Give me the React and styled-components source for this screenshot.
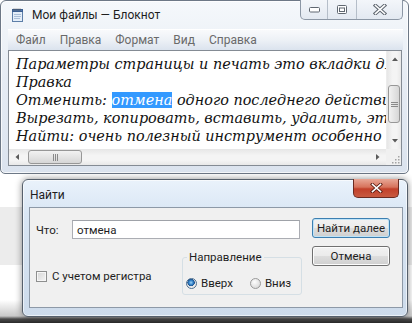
import React from 'react';
import styled, { createGlobalStyle } from 'styled-components';

const GlobalStyle = createGlobalStyle`
  html, body { margin: 0; padding: 0; }
  body {
    width: 412px;
    height: 323px;
    overflow: hidden;
    font-family: Roboto, "Noto Sans", sans-serif;
    background: linear-gradient(to bottom, #fff 0, #fff 207px, #ececec 207px, #ececec 265px,
      #fff 265px, #fff 300px, #c9c9c9 316px, #4a4a4a 319px, #2a2a2a 323px);
  }
`;

const Page = styled.div`
  display: flex;
  flex-direction: column;
  align-items: flex-start;
`;

/* ---------- notepad window ---------- */

const Window = styled.div`
  width: 409px;
  height: 174px;
  box-sizing: border-box;
  border: 1px solid #6d7886;
  border-radius: 6px 6px 5px 5px;
  background: linear-gradient(to bottom, #f5f8fb 0%, #e6ecf4 45%, #dbe3ee 100%);
  box-shadow: inset 0 0 0 1px rgba(255, 255, 255, 0.75);
  padding: 0 4px 7px 7px;
  display: flex;
  flex-direction: column;
`;

const TitleBar = styled.div`
  height: 28px;
  display: flex;
  align-items: center;
`;

const TitleText = styled.span`
  margin-left: 8px;
  font-size: 12px;
  color: #1e1e1e;
  flex: 1;
`;

const CaptionGroup = styled.div`
  align-self: flex-start;
  margin-top: -1px;
  margin-right: 1px;
  display: flex;
  border: 1px solid #8c97a5;
  border-top: none;
  border-radius: 0 0 5px 5px;
  overflow: hidden;
  background: linear-gradient(to bottom, #f3f6fa, #e3e9f1);
`;

const CaptionButton = styled.div`
  width: ${p => p.w}px;
  height: 19px;
  display: flex;
  align-items: center;
  justify-content: center;
  border-left: ${p => (p.first ? 'none' : '1px solid #b5bec9')};
`;

const MenuBar = styled.div`
  height: 21px;
  margin-right: 1px;
  display: flex;
  align-items: center;
  gap: 14px;
  padding-left: 8px;
  background: linear-gradient(to bottom, #f9fafc 0%, #edf1f6 50%, #dbe3ee 100%);
  border-top: 1px solid #fff;
  box-sizing: border-box;
`;

const MenuItem = styled.span`
  font-size: 12px;
  color: #6a6a6a;
`;

const EditArea = styled.div`
  flex: 1;
  margin-right: 2px;
  border: 1px solid #848b94;
  display: grid;
  grid-template-columns: 1fr 15px;
  grid-template-rows: 1fr 16px;
  background: #fff;
  min-height: 0;
`;

const TextPane = styled.div`
  padding: 4px 0 0 7px;
  overflow: hidden;
  white-space: nowrap;
  font-family: "DejaVu Serif", "Liberation Serif", serif;
  font-style: italic;
  font-size: 14.4px;
  line-height: 18px;
  color: #111;
`;

const Selected = styled.span`
  background: #3399ff;
  color: #fff;
`;

const VScroll = styled.div`
  display: flex;
  flex-direction: column;
  background: linear-gradient(to right, #e6e6e6, #f4f4f4 40%, #f4f4f4 70%, #e8e8e8);
  border-left: 1px solid #ececec;
`;

const HScroll = styled.div`
  display: flex;
  align-items: center;
  background: linear-gradient(to bottom, #e6e6e6, #f4f4f4 40%, #f4f4f4 70%, #e8e8e8);
`;

const ArrowCell = styled.div`
  width: ${p => p.w || 15}px;
  height: ${p => p.h || 16}px;
  display: flex;
  align-items: center;
  justify-content: center;
  flex-shrink: 0;
`;

const Thumb = styled.div`
  box-sizing: border-box;
  border: 1px solid #979797;
  border-radius: 3px;
  background: ${p => (p.vertical
    ? 'linear-gradient(to right, #f2f2f2, #e4e4e4 50%, #d6d6d6)'
    : 'linear-gradient(to bottom, #f2f2f2, #e4e4e4 50%, #d6d6d6)')};
  display: flex;
  align-items: center;
  justify-content: center;
  flex-shrink: 0;
`;

const VThumb = styled(Thumb)`
  margin: 17px 1px 0 1px;
  height: 38px;
`;

const HThumb = styled(Thumb)`
  margin-left: 2px;
  width: 54px;
  height: 14px;
`;

const Spacer = styled.div`
  flex: 1;
`;

const Grip = styled.div`
  background: #f0f0f0;
  display: flex;
  align-items: flex-end;
  justify-content: flex-end;
`;

/* ---------- find dialog ---------- */

const Dialog = styled.div`
  margin: 5px 0 0 22px;
  width: 386px;
  height: 138px;
  box-sizing: border-box;
  border: 1px solid #56606c;
  border-radius: 6px;
  background: linear-gradient(to bottom, #eaf2fb 0%, #d9e6f4 25%, #cddbeb 100%);
  box-shadow: 0 0 7px rgba(0, 0, 0, 0.45), inset 0 0 0 1px rgba(255, 255, 255, 0.6);
  padding: 0 4px 8px 6px;
  display: flex;
  flex-direction: column;
`;

const DialogTitle = styled.div`
  height: 27px;
  display: flex;
  align-items: center;
  padding-left: 1px;
`;

const DialogTitleText = styled.span`
  flex: 1;
  font-size: 12px;
  color: #1e1e1e;
  margin-top: 2px;
`;

const RedClose = styled.div`
  align-self: flex-start;
  margin-top: -1px;
  margin-right: 4px;
  width: 46px;
  height: 19px;
  box-sizing: border-box;
  border: 1px solid #6b2a20;
  border-top: none;
  border-radius: 0 0 5px 5px;
  background: linear-gradient(to bottom, #e8a796 0%, #d7735c 45%, #c2402a 55%, #c85a40 100%);
  display: flex;
  align-items: center;
  justify-content: center;
`;

const Client = styled.div`
  flex: 1;
  border: 1px solid #8d99a7;
  background: #f0f0f0;
  padding: 10px 12px 0 6px;
  display: flex;
  gap: 10px;
  font-size: 11.5px;
  color: #1e1e1e;
`;

const LeftCol = styled.div`
  width: 266px;
  display: flex;
  flex-direction: column;
`;

const FindRow = styled.div`
  margin-top: 2px;
  display: flex;
  align-items: center;
`;

const Label = styled.span`
  width: 36px;
`;

const Input = styled.div`
  width: 228px;
  height: 19px;
  box-sizing: border-box;
  border: 1px solid #abadb3;
  border-top-color: #9fa2a8;
  background: #fff;
  padding-left: 4px;
  display: flex;
  align-items: center;
`;

const OptionsRow = styled.div`
  margin-top: 18px;
  display: flex;
  align-items: center;
  justify-content: space-between;
`;

const Check = styled.div`
  display: flex;
  align-items: center;
  gap: 5px;
`;

const CheckBox = styled.div`
  width: 11px;
  height: 11px;
  box-sizing: border-box;
  border: 1px solid #8e8f8f;
  background: linear-gradient(135deg, #d6d6d6, #f4f4f4);
  box-shadow: inset 0 0 0 1px #f6f6f6;
`;

const GroupBox = styled.div`
  position: relative;
  width: 120px;
  height: 38px;
  box-sizing: border-box;
  border: 1px solid #d5dfe5;
  border-radius: 3px;
  padding: 14px 0 0 3px;
  display: flex;
  gap: 17px;
`;

const Legend = styled.span`
  position: absolute;
  top: -8px;
  left: 4px;
  padding: 0 2px;
  line-height: 14px;
  background: #f0f0f0;
`;

const Radio = styled.div`
  display: flex;
  align-items: center;
  gap: 4px;
  line-height: 14px;
`;

const RadioDot = styled.div`
  width: 11px;
  height: 11px;
  box-sizing: border-box;
  border-radius: 50%;
  border: 1px solid ${p => (p.on ? '#4f6f8f' : '#9a9a9a')};
  background: ${p => (p.on
    ? 'radial-gradient(circle at 45% 40%, #9fd3f5 0, #2f7fc6 30%, #1b4f8a 48%, #e6e6e6 52%, #f8f8f8 100%)'
    : 'radial-gradient(circle at 40% 35%, #fdfdfd 0, #e2e2e2 60%, #cfcfcf 100%)')};
`;

const ButtonCol = styled.div`
  display: flex;
  flex-direction: column;
  gap: 8px;
`;

const Button = styled.div`
  width: 78px;
  height: 20px;
  box-sizing: border-box;
  border: 1px solid ${p => (p.primary ? '#3c7fb1' : '#707070')};
  border-radius: 3px;
  background: linear-gradient(to bottom, #f2f2f2 0%, #ebebeb 48%, #dddddd 52%, #cfcfcf 100%);
  box-shadow: inset 0 0 0 1px ${p => (p.primary ? '#bfe3f7' : '#fcfcfc')};
  display: flex;
  align-items: center;
  justify-content: center;
`;

/* ---------- drawings ---------- */

const NotepadIcon = () => (
  <svg width="13" height="14" viewBox="0 0 13 14" style={{ marginLeft: 3 }}>
    <rect x="1.5" y="2.5" width="10" height="11" fill="#e4eef9" stroke="#5e7fa8" />
    <rect x="1.5" y="1.5" width="10" height="2" fill="#4f7cba" stroke="#3b5f92" />
    <path d="M3 0.5v2.5M5 0.5v2.5M7 0.5v2.5M9 0.5v2.5" stroke="#555" strokeWidth="0.8" />
    <path d="M3 6.5h7M3 8.5h7M3 10.5h6" stroke="#9ab3cf" strokeWidth="0.8" />
  </svg>
);

const MinGlyph = () => (
  <svg width="11" height="6" viewBox="0 0 11 6">
    <rect x="0.5" y="0.5" width="10" height="4.5" rx="1" fill="#fff" stroke="#5f6770" />
  </svg>
);

const MaxGlyph = () => (
  <svg width="10" height="9" viewBox="0 0 10 9">
    <rect x="0.5" y="0.5" width="9" height="8" rx="1" fill="#fff" stroke="#5f6770" />
    <rect x="2.5" y="3" width="5" height="3.5" fill="#fff" stroke="#5f6770" />
  </svg>
);

const XGlyph = ({ outline = '#5f6770', fill = '#fff', w = 14, h = 11 }) => (
  <svg width={w} height={h} viewBox="0 0 14 11">
    <path d="M2.5 1.5L11.5 9.5M11.5 1.5L2.5 9.5" stroke={outline} strokeWidth="3.6" strokeLinecap="square" />
    <path d="M2.5 1.5L11.5 9.5M11.5 1.5L2.5 9.5" stroke={fill} strokeWidth="1.6" strokeLinecap="square" />
  </svg>
);

const Arrow = ({ dir }) => {
  const d = {
    up: 'M1 5L4 1.5L7 5Z',
    down: 'M1 2L4 5.5L7 2Z',
    left: 'M5 1L1.5 4L5 7Z',
    right: 'M2 1L5.5 4L2 7Z',
  }[dir];
  return (
    <svg width="8" height="8" viewBox="0 0 8 8">
      <path d={d} fill="#5a5a5a" />
    </svg>
  );
};

const GripLines = ({ vertical }) => (
  vertical ? (
    <svg width="7" height="7" viewBox="0 0 7 7">
      <path d="M0 1.5h7M0 3.5h7M0 5.5h7" stroke="#8a8a8a" strokeWidth="1" />
    </svg>
  ) : (
    <svg width="7" height="7" viewBox="0 0 7 7">
      <path d="M1.5 0v7M3.5 0v7M5.5 0v7" stroke="#8a8a8a" strokeWidth="1" />
    </svg>
  )
);

const SizeGrip = () => (
  <svg width="12" height="12" viewBox="0 0 12 12">
    {[[9, 3], [6, 6], [9, 6], [3, 9], [6, 9], [9, 9]].map(([x, y]) => (
      <rect key={`${x}-${y}`} x={x} y={y} width="1.5" height="1.5" fill="#a4a4a4" />
    ))}
  </svg>
);

const lines = [
  ['Параметры страницы и печать это вкладки для'],
  ['Правка'],
  ['Отменить: ', 'отмена', ' одного последнего действия'],
  ['Вырезать, копировать, вставить, удалить, это'],
  ['Найти: очень полезный инструмент особенно'],
];

const menu = ['Файл', 'Правка', 'Формат', 'Вид', 'Справка'];

export default function App() {
  return (
    <Page>
      <GlobalStyle />
      <Window>
        <TitleBar>
          <NotepadIcon />
          <TitleText>Мои файлы — Блокнот</TitleText>
          <CaptionGroup>
            <CaptionButton w={26} first><MinGlyph /></CaptionButton>
            <CaptionButton w={28}><MaxGlyph /></CaptionButton>
            <CaptionButton w={45}><XGlyph /></CaptionButton>
          </CaptionGroup>
        </TitleBar>
        <MenuBar>
          {menu.map(m => <MenuItem key={m}>{m}</MenuItem>)}
        </MenuBar>
        <EditArea>
          <TextPane>
            {lines.map((l, i) => (
              <div key={i}>
                {l.length === 3 ? (<>{l[0]}<Selected>{l[1]}</Selected>{l[2]}</>) : l[0]}
              </div>
            ))}
          </TextPane>
          <VScroll>
            <ArrowCell h={17}><Arrow dir="up" /></ArrowCell>
            <VThumb vertical><GripLines vertical /></VThumb>
            <Spacer />
            <ArrowCell h={17}><Arrow dir="down" /></ArrowCell>
          </VScroll>
          <HScroll>
            <ArrowCell w={17}><Arrow dir="left" /></ArrowCell>
            <HThumb><GripLines /></HThumb>
            <Spacer />
            <ArrowCell w={17}><Arrow dir="right" /></ArrowCell>
          </HScroll>
          <Grip><SizeGrip /></Grip>
        </EditArea>
      </Window>

      <Dialog>
        <DialogTitle>
          <DialogTitleText>Найти</DialogTitleText>
          <RedClose><XGlyph outline="#5a1d12" fill="#fff" w={13} h={10} /></RedClose>
        </DialogTitle>
        <Client>
          <LeftCol>
            <FindRow>
              <Label>Что:</Label>
              <Input>отмена</Input>
            </FindRow>
            <OptionsRow>
              <Check>
                <CheckBox />
                <span>С учетом регистра</span>
              </Check>
              <GroupBox>
                <Legend>Направление</Legend>
                <Radio><RadioDot on />Вверх</Radio>
                <Radio><RadioDot />Вниз</Radio>
              </GroupBox>
            </OptionsRow>
          </LeftCol>
          <ButtonCol>
            <Button primary>Найти далее</Button>
            <Button>Отмена</Button>
          </ButtonCol>
        </Client>
      </Dialog>
    </Page>
  );
}
